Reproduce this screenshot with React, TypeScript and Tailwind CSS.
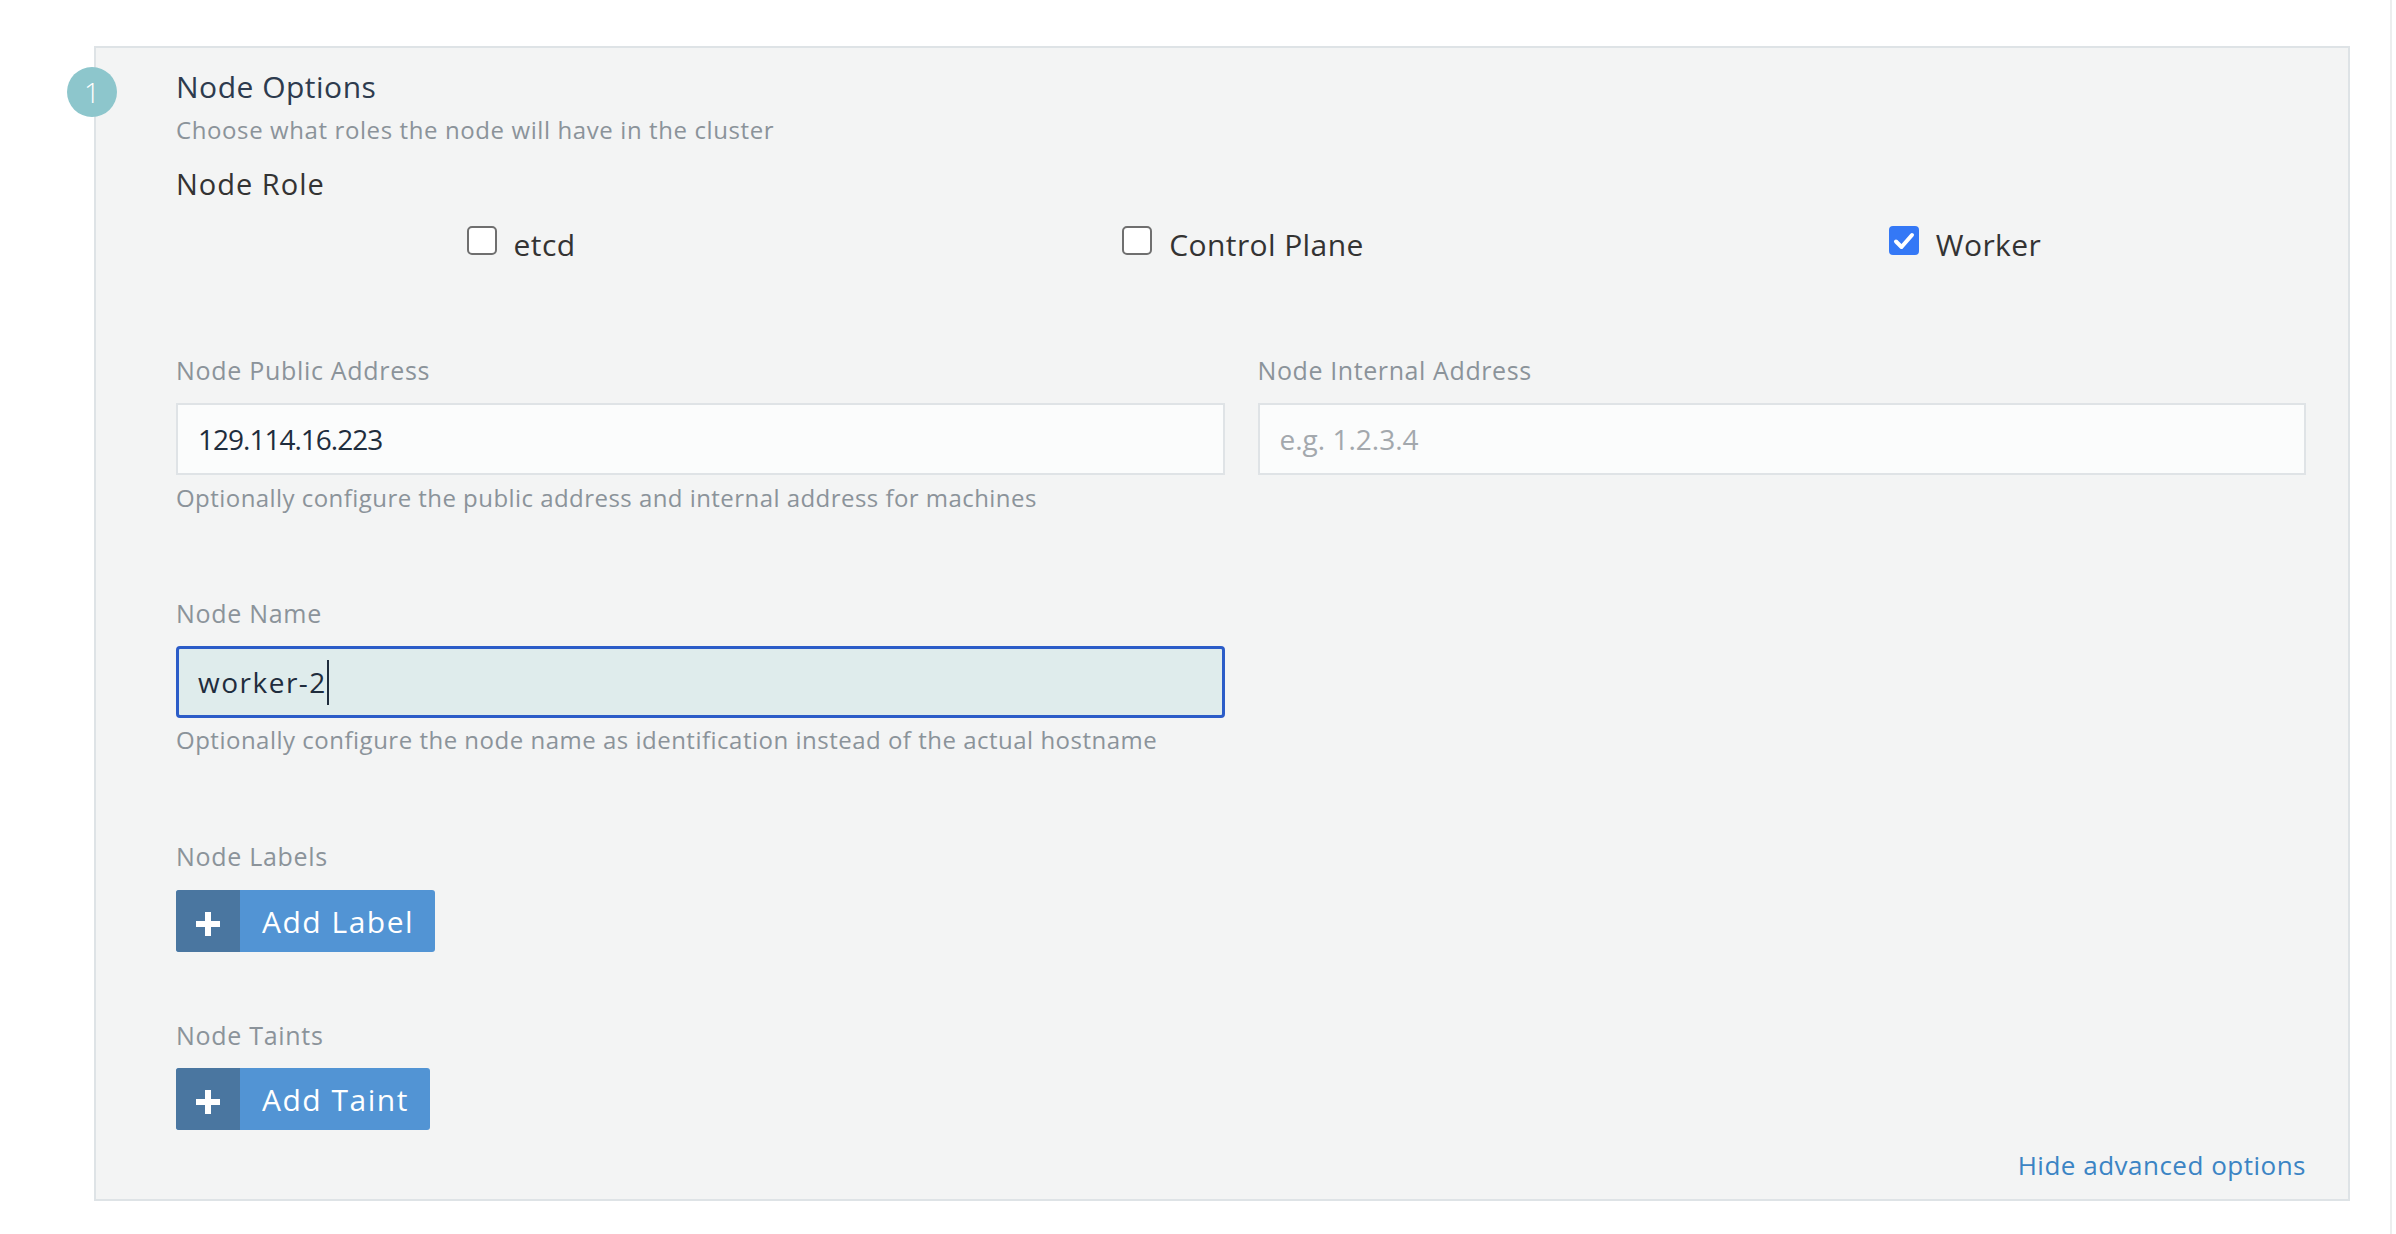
import React from 'react';

function Checkbox({ checked, label }: { checked?: boolean; label: string }) {
  return (
    <div className="flex justify-center">
      <div className="flex items-start gap-[17px]">
        {checked ? (
          <div className="mt-[-1px] flex h-[29px] w-[30px] items-center justify-center rounded-[4px] bg-[#3478f6]">
            <svg width="22" height="20" viewBox="0 0 22 20">
              <path d="M3 10.5 L8.5 16 L19 4" fill="none" stroke="#fff" strokeWidth="4" strokeLinecap="round" strokeLinejoin="round" />
            </svg>
          </div>
        ) : (
          <div className="mt-[-1px] h-[29px] w-[30px] rounded-[5px] border-2 border-[#6f6f6f] bg-white" />
        )}
        <span className="text-[30px] leading-[36px] tracking-[0.4px] text-[#333]">{label}</span>
      </div>
    </div>
  );
}

function AddButton({ label }: { label: string }) {
  return (
    <button className="flex h-[62px] items-stretch overflow-hidden rounded-[3px] bg-[#5294d4] text-white">
      <span className="flex w-[64px] items-center justify-center bg-[#4a76a0] pt-[6px]">
        <svg width="24" height="24" viewBox="0 0 24 24">
          <rect x="9" y="0" width="6" height="24" fill="#fff" />
          <rect x="0" y="9" width="24" height="6" fill="#fff" />
        </svg>
      </span>
      <span className="flex items-center pl-[22px] pr-[21px] text-[30px] tracking-[1.5px]">{label}</span>
    </button>
  );
}

export default function App() {
  return (
    <div className="flex min-h-screen bg-white" style={{ fontFamily: "'Open Sans', 'Liberation Sans', sans-serif" }}>
      <div className="flex-1 pl-[94px] pr-[40px] pt-[46px]">
        <div className="relative border-2 border-[#dee3e6] bg-[#f3f4f4] pb-[18px] pl-[80px] pr-[42px] pt-[21px]">
          <div className="absolute left-[-29px] top-[19px] flex h-[50px] w-[50px] items-center justify-center rounded-full bg-[#8dc6cc] text-[28px] font-light text-white">
            1
          </div>

          <h2 className="text-[30px] leading-[36px] tracking-[0.5px] text-[#2d3b4e]">Node Options</h2>
          <p className="mt-[10px] text-[24px] leading-[30px] tracking-[0.6px] text-[#8b939a]">Choose what roles the node will have in the cluster</p>

          <h3 className="mt-[21px] text-[29px] leading-[36px] tracking-[1px] text-[#333]">Node Role</h3>
          <div className="ml-[-16px] mr-[-20px] mt-[25px] grid grid-cols-3">
            <Checkbox label="etcd" />
            <Checkbox label="Control Plane" />
            <Checkbox checked label="Worker" />
          </div>

          <div className="mt-[92px] grid grid-cols-2 gap-[33px]">
            <div>
              <label className="block text-[25px] leading-[30px] tracking-[0.7px] text-[#8b939a]">Node Public Address</label>
              <div className="mt-[18px] flex h-[72px] items-center border-2 border-[#dfe3e6] bg-[#fbfcfc] px-[20px] text-[28px] tracking-[-1px] text-[#1f2d3d]">
                129.114.16.223
              </div>
              <p className="mt-[8px] whitespace-nowrap text-[24px] leading-[30px] tracking-[0.45px] text-[#8b939a]">
                Optionally configure the public address and internal address for machines
              </p>
            </div>
            <div>
              <label className="block text-[25px] leading-[30px] tracking-[0.6px] text-[#8b939a]">Node Internal Address</label>
              <div className="mt-[18px] flex h-[72px] items-center border-2 border-[#dfe3e6] bg-[#fbfcfc] px-[20px] text-[28px] text-[#a3a8ad]">
                e.g. 1.2.3.4
              </div>
            </div>
          </div>

          <div className="mt-[85px] grid grid-cols-2 gap-[33px]">
            <div>
              <label className="block text-[25px] leading-[30px] tracking-[0.7px] text-[#8b939a]">Node Name</label>
              <div className="mt-[18px] flex h-[72px] items-center rounded-[4px] border-[3px] border-[#2b5cc8] bg-[#dfecec] px-[19px] text-[28px] tracking-[1.5px] text-[#1f2d3d]">
                worker-2
                <span className="inline-block h-[45px] w-[2px] bg-[#1f2d3d]" />
              </div>
              <p className="mt-[7px] whitespace-nowrap text-[24px] leading-[30px] tracking-[0.5px] text-[#8b939a]">
                Optionally configure the node name as identification instead of the actual hostname
              </p>
            </div>
          </div>

          <label className="mt-[86px] block text-[25px] leading-[30px] tracking-[0.7px] text-[#8b939a]">Node Labels</label>
          <div className="mt-[19px] flex">
            <AddButton label="Add Label" />
          </div>

          <label className="mt-[68px] block text-[25px] leading-[30px] tracking-[0.7px] text-[#8b939a]">Node Taints</label>
          <div className="mt-[18px] flex">
            <AddButton label="Add Taint" />
          </div>

          <div className="mt-[19px] text-right text-[26px] leading-[32px] tracking-[0.5px] text-[#3b84c4]">
            Hide advanced options
          </div>
        </div>
      </div>
      <div className="w-[6px] border-l-2 border-[#eceeee]" />
    </div>
  );
}
